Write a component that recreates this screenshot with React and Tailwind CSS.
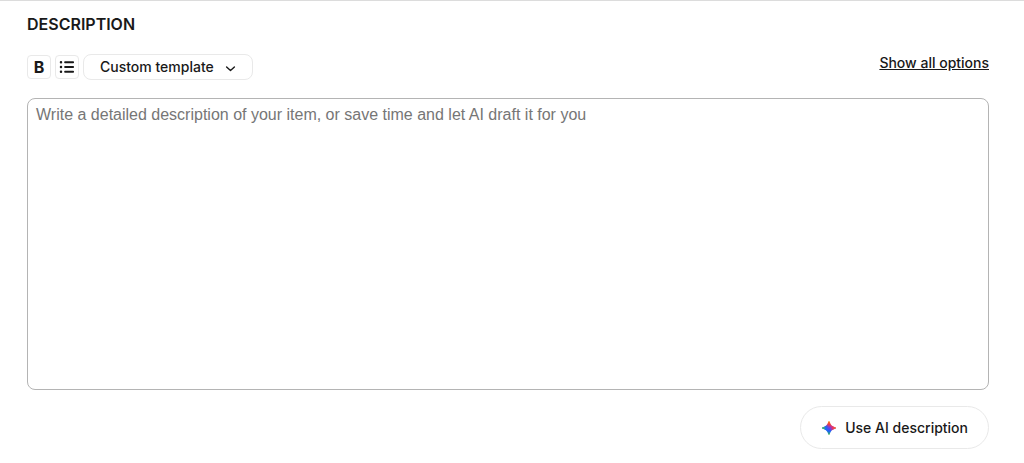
import React, { useRef, useState } from 'react';

const templates = ['Custom template'];

const BulletListIcon = () => (
  <svg className="w-4 h-4" viewBox="0 0 16 16" fill="currentColor" aria-hidden="true">
    <rect x="0.8" y="2" width="2.4" height="2.4" rx="1" />
    <rect x="0.8" y="6.8" width="2.4" height="2.4" rx="1" />
    <rect x="0.8" y="11.6" width="2.4" height="2.4" rx="1" />
    <rect x="5.2" y="2.2" width="9.8" height="2" rx="0.8" />
    <rect x="5.2" y="7" width="9.8" height="2" rx="0.8" />
    <rect x="5.2" y="11.8" width="9.8" height="2" rx="0.8" />
  </svg>
);

const SparkIcon = () => (
  <svg className="w-4 h-4" viewBox="0 0 16 16" aria-hidden="true">
    <defs>
      <linearGradient id="spark-base" x1="9" y1="1" x2="7" y2="15" gradientUnits="userSpaceOnUse">
        <stop offset="0" stopColor="#ff8a00" />
        <stop offset="0.25" stopColor="#f5364a" />
        <stop offset="0.5" stopColor="#6a40f2" />
        <stop offset="0.72" stopColor="#1b62f5" />
        <stop offset="1" stopColor="#3fc34a" />
      </linearGradient>
      <radialGradient id="spark-left" cx="1" cy="8" r="7" gradientUnits="userSpaceOnUse">
        <stop offset="0" stopColor="#35c25a" />
        <stop offset="0.25" stopColor="#35b27a" />
        <stop offset="0.55" stopColor="#1b6cf5" />
        <stop offset="1" stopColor="#1b6cf5" stopOpacity="0" />
      </radialGradient>
      <radialGradient id="spark-right" cx="15" cy="8" r="6" gradientUnits="userSpaceOnUse">
        <stop offset="0" stopColor="#ff8a1a" />
        <stop offset="0.5" stopColor="#f0305f" />
        <stop offset="1" stopColor="#f0305f" stopOpacity="0" />
      </radialGradient>
    </defs>
    {['spark-base', 'spark-left', 'spark-right'].map((id) => (
      <path
        key={id}
        fill={`url(#${id})`}
        d="M8 1C8.4 1 8.6 1.3 8.8 1.9C9.8 5 11 6.2 14.1 7.2C14.7 7.4 15 7.6 15 8C15 8.4 14.7 8.6 14.1 8.8C11 9.8 9.8 11 8.8 14.1C8.6 14.7 8.4 15 8 15C7.6 15 7.4 14.7 7.2 14.1C6.2 11 5 9.8 1.9 8.8C1.3 8.6 1 8.4 1 8C1 7.6 1.3 7.4 1.9 7.2C5 6.2 6.2 5 7.2 1.9C7.4 1.3 7.6 1 8 1Z"
      />
    ))}
  </svg>
);

const App = () => {
  const textRef = useRef(null);
  const [description, setDescription] = useState('');

  // Wraps the selected text in bold markers
  const makeBold = () => {
    const { selectionStart, selectionEnd } = textRef.current;
    const selected = description.slice(selectionStart, selectionEnd);
    if (!selected) return;
    setDescription(
      `${description.slice(0, selectionStart)}**${selected}**${description.slice(selectionEnd)}`
    );
  };

  const addBullet = () => {
    setDescription(description ? `${description}\n• ` : '• ');
    textRef.current.focus();
  };

  return (
    <section className="border-t border-[#dcdcdc] bg-white pt-[11px] pb-3 pl-[27px] pr-[35px] font-['Inter',sans-serif] text-[#191919]">
      <h2 className="text-base leading-6 font-semibold">
        <label htmlFor="description">DESCRIPTION</label>
      </h2>

      {/* Toolbar */}
      <div className="mt-[18px] flex items-start justify-between">
        <div className="flex items-center gap-1">
          <button
            type="button"
            aria-label="Bold"
            onClick={makeBold}
            className="flex h-6 w-6 items-center justify-center rounded border border-[#e9e9e9] text-base font-bold"
          >
            B
          </button>
          <button
            type="button"
            aria-label="Bulleted list"
            onClick={addBullet}
            className="flex h-6 w-6 items-center justify-center rounded border border-[#e9e9e9]"
          >
            <BulletListIcon />
          </button>
          <div className="relative flex">
            <select
              aria-label="Template"
              className="h-[26px] w-[170px] appearance-none rounded-lg border border-[#e9e9e9] bg-white pl-4 text-sm font-medium"
            >
              {templates.map((name) => (
                <option key={name}>{name}</option>
              ))}
            </select>
            <svg
              className="pointer-events-none absolute top-2 right-4 h-3 w-3"
              viewBox="0 0 12 12"
              fill="none"
              stroke="currentColor"
              strokeWidth="1.4"
              strokeLinecap="round"
              strokeLinejoin="round"
              aria-hidden="true"
            >
              <path d="M1.6 5l3.9 3.6L9.4 5" />
            </svg>
          </div>
        </div>
        <a href="#options" className="text-sm leading-[18px] font-medium underline">
          Show all options
        </a>
      </div>

      <textarea
        id="description"
        ref={textRef}
        value={description}
        onChange={(e) => setDescription(e.target.value)}
        placeholder="Write a detailed description of your item, or save time and let AI draft it for you"
        className="mt-[18px] block h-73 w-full resize-none rounded-lg border border-[#b4b4b4] px-2 py-1 font-['Liberation_Sans',sans-serif] text-base leading-6 placeholder:text-[#767676]"
      />

      <div className="mt-4 flex justify-end">
        <button
          type="button"
          className="flex h-[43px] items-center gap-2 rounded-full border border-[#e9e9e9] px-5 text-sm font-medium"
        >
          <SparkIcon />
          Use AI description
        </button>
      </div>
    </section>
  );
};

export default App;
